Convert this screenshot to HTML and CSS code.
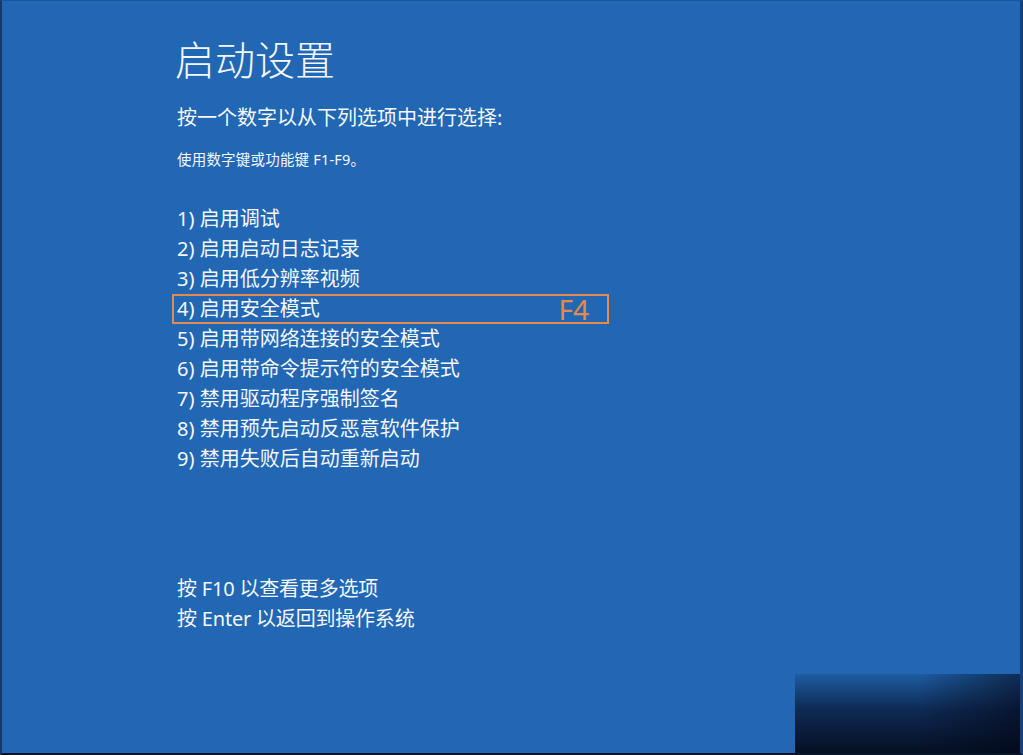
FILE: index.html
```html
<!DOCTYPE html>
<html lang="zh-CN">
<head>
<meta charset="utf-8">
<title>启动设置</title>
<link rel="stylesheet" href="styles.css">
</head>
<body>
<div class="screen">
  <main class="content">
    <h1 class="title">启动设置</h1>
    <p class="lead">按一个数字以从下列选项中进行选择:</p>
    <p class="hint">使用数字键或功能键 F1-F9。</p>
    <ul class="options">
      <li>1) 启用调试</li>
      <li>2) 启用启动日志记录</li>
      <li>3) 启用低分辨率视频</li>
      <li class="selected"><span>4) 启用安全模式</span><span class="key">F4</span></li>
      <li>5) 启用带网络连接的安全模式</li>
      <li>6) 启用带命令提示符的安全模式</li>
      <li>7) 禁用驱动程序强制签名</li>
      <li>8) 禁用预先启动反恶意软件保护</li>
      <li>9) 禁用失败后自动重新启动</li>
    </ul>
    <ul class="footer">
      <li>按 F10 以查看更多选项</li>
      <li>按 Enter 以返回到操作系统</li>
    </ul>
  </main>
  <div class="shade"></div>
</div>
</body>
</html>
```
FILE: styles.css
```css
html, body {
  margin: 0;
  padding: 0;
  background: #2167b3;
}

.screen {
  position: relative;
  box-sizing: border-box;
  width: 1023px;
  height: 755px;
  background: #2167b3;
  border-top: 1px solid #1d5598;
  border-left: 2px solid #16386a;
  border-right: 3px solid #17407a;
  border-bottom: 2px solid #081428;
  overflow: hidden;
  color: #f5f7fb;
  font-family: "Noto Sans", "Noto Sans CJK SC", sans-serif;
}

.content {
  padding: 35px 0 0 173px;
}

.title {
  margin: 0;
  font-size: 40px;
  font-weight: 300;
  line-height: 48px;
}

.lead {
  margin: 19px 0 0 2px;
  font-size: 20px;
  line-height: 30px;
}

.hint {
  margin: 16px 0 0 2px;
  font-size: 14.5px;
  line-height: 20px;
  letter-spacing: 0.2px;
}

.options,
.footer {
  list-style: none;
  margin: 35px 0 0 2px;
  padding: 0;
  font-size: 20px;
  line-height: 30px;
}

.options li {
  height: 30px;
}

.options .selected {
  display: flex;
  justify-content: space-between;
  align-items: center;
  box-sizing: border-box;
  width: 437px;
  height: 30px;
  margin-left: -5px;
  padding: 0 18px 0 3px;
  border: 2px solid #e5894c;
  line-height: 26px;
}

.key {
  color: #e5894c;
  font-size: 28px;
  line-height: 26px;
}

.footer {
  margin-top: 100px;
  letter-spacing: -0.2px;
}

.shade {
  position: absolute;
  left: 793px;
  right: 0;
  bottom: 0;
  height: 79px;
  background:
    linear-gradient(to right, rgba(2, 6, 20, 0) 55%, rgba(2, 6, 20, 0.55) 100%),
    linear-gradient(to bottom, rgba(6, 16, 42, 0.12) 0%, rgba(6, 16, 42, 0.7) 45%, rgba(4, 10, 28, 0.95) 100%);
}
```
